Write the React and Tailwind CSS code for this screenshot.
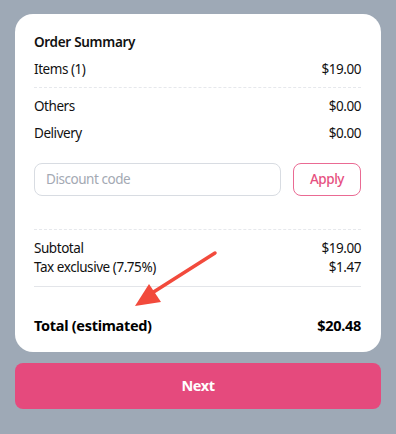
import React from "react";

export default function App() {
  return (
    <div
      className="w-[396px] h-[434px] bg-[#9ea9b6] px-[15px] pt-[14px] relative"
      style={{ fontFamily: '"Noto Sans", "Open Sans", sans-serif' }}
    >
      <div className="bg-white rounded-[18px] pl-[19px] pr-[20px] pt-[32px] pb-[16px] text-[13.5px] tracking-[-0.45px] text-[#111]">
        <div className="font-semibold leading-[20px] -mt-[14px] tracking-[-0.3px]">Order Summary</div>
        <div className="flex justify-between leading-[20px] mt-[7px]">
          <span>Items (1)</span>
          <span>$19.00</span>
        </div>
        <div className="border-t border-dashed border-[#e6e8ec] mt-[8px]" />
        <div className="flex justify-between leading-[20px] mt-[8px]">
          <span>Others</span>
          <span>$0.00</span>
        </div>
        <div className="flex justify-between leading-[20px] mt-[7px]">
          <span>Delivery</span>
          <span>$0.00</span>
        </div>
        <div className="flex gap-[12px] mt-[20px]">
          <div className="flex-1 h-[33px] border border-[#d8dce2] rounded-[8px] flex items-center px-[11px] text-[#a3a9b3]">
            Discount code
          </div>
          <div className="w-[68px] h-[33px] border border-[#ea6a93] rounded-[8px] flex items-center justify-center text-[#e64f80] font-medium">
            Apply
          </div>
        </div>
        <div className="border-t border-dashed border-[#e6e8ec] mt-[33px]" />
        <div className="flex justify-between leading-[19px] mt-[9px]">
          <span>Subtotal</span>
          <span>$19.00</span>
        </div>
        <div className="flex justify-between leading-[19px]">
          <span>Tax exclusive (7.75%)</span>
          <span>$1.47</span>
        </div>
        <div className="border-t border-[#e3e5e9] mt-[9px]" />
        <div className="flex justify-between leading-[22px] mt-[27px] text-[14.5px] font-bold tracking-[-0.3px] text-black">
          <span>Total (estimated)</span>
          <span>$20.48</span>
        </div>
      </div>
      <button className="mt-[11px] w-full h-[46px] rounded-[8px] bg-[#e54a7d] text-white font-bold text-[14.5px] tracking-[-0.4px]">
        Next
      </button>
      <svg
        className="absolute left-0 top-0 pointer-events-none"
        width="396"
        height="434"
        viewBox="0 0 396 434"
      >
        <line x1="215" y1="253" x2="152" y2="293" stroke="#f24a3c" strokeWidth="3.5" strokeLinecap="round" />
        <polygon points="135,306 149,284 161,302" fill="#f24a3c" />
      </svg>
    </div>
  );
}
